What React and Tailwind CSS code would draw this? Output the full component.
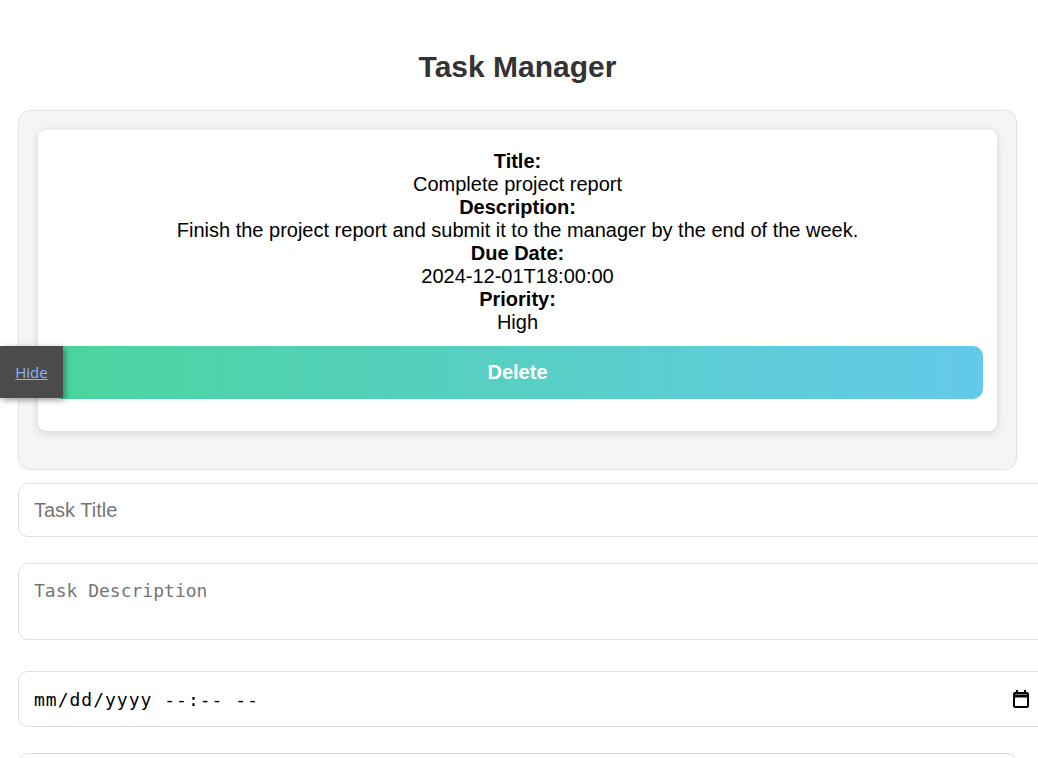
export default function App() {
  const task = {
    title: "Complete project report",
    description: "Finish the project report and submit it to the manager by the end of the week.",
    dueDate: "2024-12-01T18:00:00",
    priority: "High",
  };

  return (
    <div className="relative h-[758px] overflow-hidden bg-white pl-[18px] pr-[21px] font-['Liberation_Sans',Arial,sans-serif]">
      <h1 className="pt-[50px] pb-[26px] text-center text-[30px] font-bold leading-[34px] text-[#333]">
        Task Manager
      </h1>

      {/* Task list */}
      <div className="rounded-[12px] border border-[#e2e2e2] bg-[#f5f5f5] px-[19px] pt-[19px] pb-[38px]">
        <div className="rounded-[8px] bg-white px-[14px] pt-[20px] pb-[32px] text-center text-[20px] leading-[23px] text-black shadow-[0_2px_8px_rgba(0,0,0,0.15)]">
          <div className="font-bold">Title:</div>
          <div>{task.title}</div>
          <div className="font-bold">Description:</div>
          <div>{task.description}</div>
          <div className="font-bold">Due Date:</div>
          <div>{task.dueDate}</div>
          <div className="font-bold">Priority:</div>
          <div>{task.priority}</div>
          <button className="mt-[12px] flex h-[53px] w-full items-center justify-center rounded-[10px] bg-gradient-to-r from-[#4bd49d] to-[#64c9ea] text-[20px] font-bold text-white">
            Delete
          </button>
        </div>
      </div>

      {/* Form */}
      <div className="mt-[13px] flex flex-col">
        <div className="flex h-[54px] w-[1034px] shrink-0 items-center rounded-[10px] border border-[#ddd] px-[15px] text-[20px] text-[#757575]">
          Task Title
        </div>
        <div className="mt-[26px] h-[77px] w-[1034px] shrink-0 rounded-[10px] border border-[#ddd] px-[15px] pt-[16px] font-['DejaVu_Sans_Mono',monospace] text-[18px] leading-[21px] text-[#757575]">
          Task Description
        </div>
        <div className="mt-[31px] flex h-[56px] w-[1034px] shrink-0 items-center rounded-[10px] border border-[#ddd] pl-[15px] pr-[22px] font-['DejaVu_Sans_Mono',monospace] text-[18px] text-black">
          <span className="flex-1 tracking-[1px]">mm/dd/yyyy --:-- --</span>
          <svg width="16" height="18" viewBox="0 0 16 18" fill="none" stroke="black" strokeWidth="2">
            <rect x="1" y="3" width="14" height="14" rx="1" />
            <path d="M1 6h14" strokeWidth="3" />
            <path d="M4 0v3M12 0v3" />
          </svg>
        </div>
        <div className="mt-[26px] h-[55px] w-full shrink-0 rounded-[10px] border border-[#ddd]" />
      </div>

      {/* Hide tab overlay */}
      <div className="absolute left-0 top-[346px] flex h-[52px] w-[63px] items-center justify-center bg-[#4b4b4b] shadow-[2px_2px_6px_rgba(0,0,0,0.4)]">
        <a href="#" className="font-['Open_Sans',sans-serif] text-[15px] text-[#8ab4f8] underline">
          Hide
        </a>
      </div>
    </div>
  );
}
